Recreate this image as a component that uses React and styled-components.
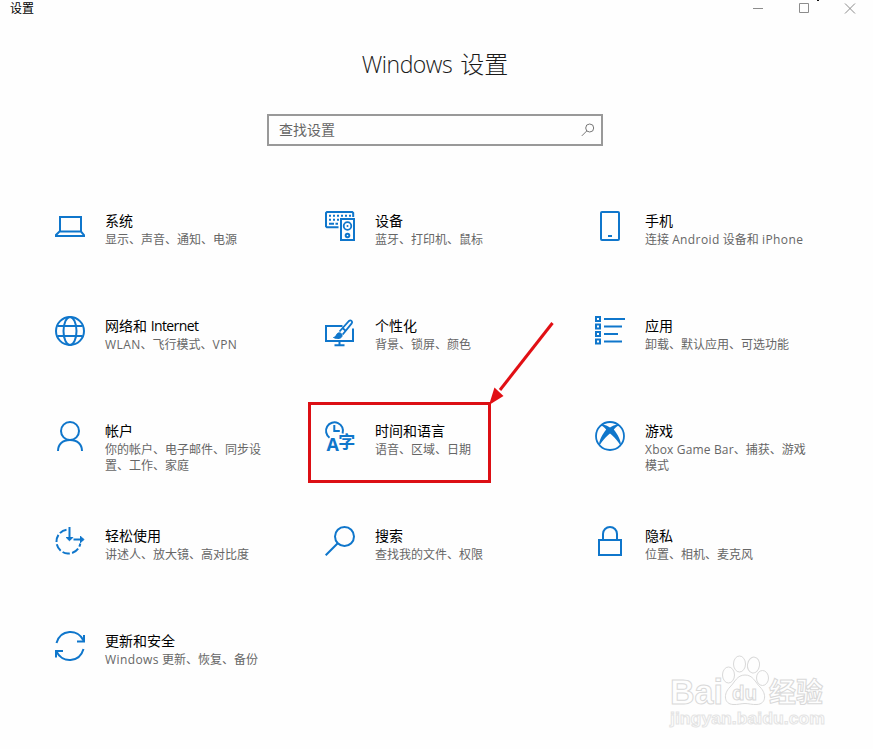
import React from 'react'
import styled, { createGlobalStyle } from 'styled-components'

const GlobalStyle = createGlobalStyle`
  * {
    box-sizing: border-box;
  }
  body {
    margin: 0;
    overflow: hidden;
    background: #fefefe;
    font-family: 'Open Sans', 'Noto Sans CJK SC', sans-serif;
  }
`

const icons = {
  system: (
    <g>
      <path d="M5 20V6h21v14" />
      <path d="M4.500 20.500h21.500l3 3.500v1H1v-1z" />
    </g>
  ),
  devices: (
    <g>
      <path d="M13.500 16.2H1.9L1 15.300V2l1-1h25.200l1 1v4" />
      <path d="M4 4.700h22" strokeDasharray="2 2" />
      <path d="M4 8.700h12" strokeDasharray="2 2" />
      <path d="M4 12.700h9" strokeDasharray="5 1.500 3 9" />
      <path d="M16 8h13v21H16z" />
      <circle cx="22.500" cy="15" r="3.800" strokeWidth="1.800" />
      <circle cx="22.500" cy="15" r="1" fill="#0f76cb" stroke="none" />
      <circle cx="22.500" cy="24.500" r="1.800" strokeWidth="2" />
    </g>
  ),
  phone: (
    <g>
      <rect x="6" y="1" width="18" height="28" rx="1" />
      <path d="M13 25h4" />
    </g>
  ),
  network: (
    <g>
      <circle cx="15" cy="15" r="14" />
      <ellipse cx="15" cy="15" rx="6.500" ry="14" />
      <path d="M2.500 10h25M2.500 20h25" />
    </g>
  ),
  personal: (
    <g>
      <path d="M17.500 10H1v15h27V12.500" />
      <path d="M14.500 25v4M9.500 29.200h10" />
      <path
        d="M8.500 21.500c2.600-.2 2.400-2.600 3.900-4 1.700-1.500 4.700-.4 4.700 1.800 0 3.600-5 4-8.600 2.200z"
        fill="#0f76cb"
        strokeWidth="1"
      />
      <path d="M14.500 15.500L24 5c1.700-1.600 4.100.6 2.700 2.400L17.700 18.500M17.500 12l3.700 3.200" strokeWidth="1.800" />
    </g>
  ),
  apps: (
    <g>
      <path d="M1 1h4v4H1zM1 8.500h4v4H1zM1 16h4v4H1zM1 23.500h4v4H1z" />
      <path d="M9 3h21M9 10.500h18M9 18h14M9 25.500h18" />
    </g>
  ),
  accounts: (
    <g>
      <circle cx="15" cy="10" r="9" />
      <path d="M3 30c0-6.500 4.500-11 12-11s12 4.500 12 11" />
    </g>
  ),
  time: (
    <g>
      <path d="M17.600 12.500A8.500 8.500 0 1 0 4.500 16.700" />
      <path d="M9.300 4v6h5.500" />
    </g>
  ),
  gaming: (
    <g>
      <circle cx="15" cy="15" r="14" strokeWidth="1.800" />
      <path
        d="M5.500 4.200c2.600-1.400 6.500.1 9.500 2.300 3-2.200 6.900-3.700 9.500-2.300-1.800.4-3.900 2-5.700 4.300C22.300 13 26.500 19.500 26 25.500 23.700 20.800 19 15.600 15 12.500 11 15.600 6.300 20.800 4 25.500 3.500 19.500 7.700 13 11.200 8.500 9.400 6.200 7.300 4.600 5.500 4.200z"
        fill="#0f76cb"
        stroke="none"
      />
    </g>
  ),
  ease: (
    <g>
      <path d="M11.500 3.700A12 12 0 1 0 25.300 17.500" strokeDasharray="7.500 2.300" />
      <path d="M14.500 1v13" />
      <path d="M11.200 11.500h6.600l-3.300 3.300z" fill="#0f76cb" strokeWidth="1" />
      <path d="M18.500 13.500h10" />
      <path d="M25.500 10.200v6.600l3.300-3.300z" fill="#0f76cb" strokeWidth="1" />
    </g>
  ),
  search: (
    <g>
      <circle cx="19.500" cy="10.500" r="9.500" />
      <path d="M12.700 17.300L.7 29.300" />
    </g>
  ),
  privacy: (
    <g>
      <path d="M4 14h22v15H4z" />
      <path d="M8 14V8a7 7 0 0 1 14 0v6" />
    </g>
  ),
  update: (
    <g>
      <path d="M1.500 12C5.500-2 23-2.500 28.500 9.500" />
      <path d="M29 4v6.500h-7" />
      <path d="M28.500 18C24.500 32 7 32.500 1.500 20.500" />
      <path d="M1 26.500V20h7" />
    </g>
  ),
}

const categories = [
  { icon: 'system', title: '系统', text: '显示、声音、通知、电源' },
  { icon: 'devices', title: '设备', text: '蓝牙、打印机、鼠标' },
  { icon: 'phone', title: '手机', text: '连接 Android 设备和 iPhone' },
  { icon: 'network', title: '网络和 Internet', text: 'WLAN、飞行模式、VPN' },
  { icon: 'personal', title: '个性化', text: '背景、锁屏、颜色' },
  { icon: 'apps', title: '应用', text: '卸载、默认应用、可选功能' },
  { icon: 'accounts', title: '帐户', text: '你的帐户、电子邮件、同步设置、工作、家庭' },
  { icon: 'time', title: '时间和语言', text: '语音、区域、日期' },
  { icon: 'gaming', title: '游戏', text: 'Xbox Game Bar、捕获、游戏模式' },
  { icon: 'ease', title: '轻松使用', text: '讲述人、放大镜、高对比度' },
  { icon: 'search', title: '搜索', text: '查找我的文件、权限' },
  { icon: 'privacy', title: '隐私', text: '位置、相机、麦克风' },
  { icon: 'update', title: '更新和安全', text: 'Windows 更新、恢复、备份' },
]

// latin words get their own tracking, the chinese text keeps the default one
const Mixed = ({ children, spacing }) => {
  return children.split(/([A-Za-z]+)/).map((part, i) =>
    i % 2 ? (
      <Latin key={i} spacing={spacing}>
        {part}
      </Latin>
    ) : (
      part
    )
  )
}

const Category = ({ icon, title, text }) => {
  return (
    <Item>
      <Icon viewBox="0 0 30 30">
        {icons[icon]}
        {icon === 'time' && (
          <>
            <IconText x="1.500" y="30" size="18">A</IconText>
            <IconText x="13.200" y="26.500" size="17">字</IconText>
          </>
        )}
      </Icon>
      <div>
        <ItemTitle>
          <Mixed spacing={-0.6}>{title}</Mixed>
        </ItemTitle>
        <ItemText>
          <Mixed spacing={icon === 'gaming' ? 0.2 : 0.4}>{text}</Mixed>
        </ItemText>
      </div>
    </Item>
  )
}

const App = () => {
  return (
    <Window>
      <GlobalStyle />
      <TitleBar>
        <span>设置</span>
        <Controls viewBox="0 0 110 16">
          <path d="M1 8.500h10M47.500 3.500h9v9h-9zM93 3.500l10 10M103 3.500l-10 10" />
          <path d="M65 .5h2" stroke="#111" />
        </Controls>
      </TitleBar>
      <Heading>
        <Latin spacing={-0.5}>Windows</Latin>
        <span>设置</span>
      </Heading>
      <SearchBox>
        <span>查找设置</span>
        <SearchIcon viewBox="0 0 14 14">
          <circle cx="8.700" cy="5" r="4" />
          <path d="M5.800 7.900L.8 12.900" />
        </SearchIcon>
      </SearchBox>
      <Grid>
        {categories.map((item) => (
          <Category key={item.icon} {...item} />
        ))}
      </Grid>
      <Highlight />
      <Arrow viewBox="0 0 70 86">
        <path d="M67.500 3L15 70" stroke="#e10f14" strokeWidth="3" />
        <path d="M4 85l5.500-17.500L18.500 76z" fill="#e10f14" />
      </Arrow>
      <Watermark viewBox="0 0 170 84">
        <MarkText x="3" y="54" size="35" textLength="53" lengthAdjust="spacingAndGlyphs">Bai</MarkText>
        <ellipse cx="61.500" cy="25" rx="6" ry="8" />
        <ellipse cx="72.500" cy="14" rx="6" ry="8" />
        <ellipse cx="86.500" cy="15" rx="6" ry="8" transform="rotate(8 86 15)" />
        <ellipse cx="95.500" cy="28" rx="6" ry="7.500" />
        <path d="M78 25c8 0 10 7 15 12 7 7 6 17-3 17.500-5 .3-8-1-12-1s-7 1.300-12 1c-9-.5-10-10.500-3-17.500 5-5 7-12 15-12z" />
        <MarkText x="65" y="50" size="21" textLength="25" lengthAdjust="spacingAndGlyphs">du</MarkText>
        <MarkText x="102" y="52" size="27" textLength="54" lengthAdjust="spacingAndGlyphs">经验</MarkText>
        <MarkText x="3" y="74" size="17" faint textLength="155" lengthAdjust="spacingAndGlyphs">
          jingyan.baidu.com
        </MarkText>
      </Watermark>
    </Window>
  )
}

const Window = styled.main`
  position: relative;
  width: 873px;
  height: 749px;
  overflow: hidden;
`
const TitleBar = styled.header`
  display: flex;
  justify-content: space-between;
  height: 17px;
  padding: 0 11px 0 10px;
  font-size: 12px;
  line-height: 17px;
  color: #000;
`
const Controls = styled.svg`
  width: 110px;
  height: 16px;
  fill: none;
  stroke: #8c8c8c;
`
const Latin = styled.span.withConfig({ shouldForwardProp: (prop) => prop !== 'spacing' })`
  letter-spacing: ${(props) => props.spacing}px;
`
const Heading = styled.h1`
  display: flex;
  justify-content: center;
  gap: 8px;
  margin: 29px 3px 0 0;
  font-size: 24px;
  font-weight: 300;
  line-height: 36px;
  color: #1a1a1a;
  ${Latin} {
    font-size: 23px;
  }
`
const SearchBox = styled.div`
  display: flex;
  align-items: center;
  justify-content: space-between;
  width: 336px;
  height: 32px;
  margin: 32px 0 0 267px;
  padding: 0 6px 3px 10px;
  border: 2px solid #999;
  font-size: 14px;
  color: #666;
`
const SearchIcon = styled.svg`
  width: 14px;
  height: 14px;
  margin-top: 3px;
  fill: none;
  stroke: #777;
`
const Grid = styled.section`
  display: grid;
  grid-template-columns: repeat(3, 270px);
  grid-auto-rows: 105px;
  padding: 65px 0 0 55px;
`
const Item = styled.article`
  display: flex;
  gap: 20px;
`
const Icon = styled.svg`
  flex: none;
  width: 30px;
  height: 30px;
  overflow: visible;
  fill: none;
  stroke: #0f76cb;
  stroke-width: 2;
`
const IconText = styled.text.withConfig({ shouldForwardProp: (prop) => prop !== 'size' })`
  font-size: ${(props) => props.size}px;
  font-weight: 700;
  fill: #0f76cb;
  stroke: none;
`
const ItemTitle = styled.h2`
  margin: 0;
  font-size: 14px;
  font-weight: 400;
  line-height: 20px;
  color: #000;
`
const ItemText = styled.p`
  width: 164px;
  margin: 1px 0 0;
  font-size: 12px;
  line-height: 16px;
  color: #666;
`
const Highlight = styled.div`
  position: absolute;
  left: 308px;
  top: 402px;
  width: 183px;
  height: 81px;
  border: 3px solid #dc0f14;
`
const Arrow = styled.svg`
  position: absolute;
  left: 485px;
  top: 320px;
  width: 70px;
  height: 86px;
  fill: none;
`
const Watermark = styled.svg`
  position: absolute;
  left: 667px;
  top: 650px;
  width: 170px;
  height: 84px;
  fill: #fefefe;
  stroke: #d9d9d9;
  stroke-width: 1;
`
const MarkText = styled.text.withConfig({
  shouldForwardProp: (prop) => prop !== 'size' && prop !== 'faint',
})`
  font-family: 'Liberation Sans', 'Noto Sans CJK SC', sans-serif;
  font-size: ${(props) => props.size}px;
  font-weight: 700;
  stroke: ${(props) => (props.faint ? '#e4e4e4' : '#d9d9d9')};
`

export default App
